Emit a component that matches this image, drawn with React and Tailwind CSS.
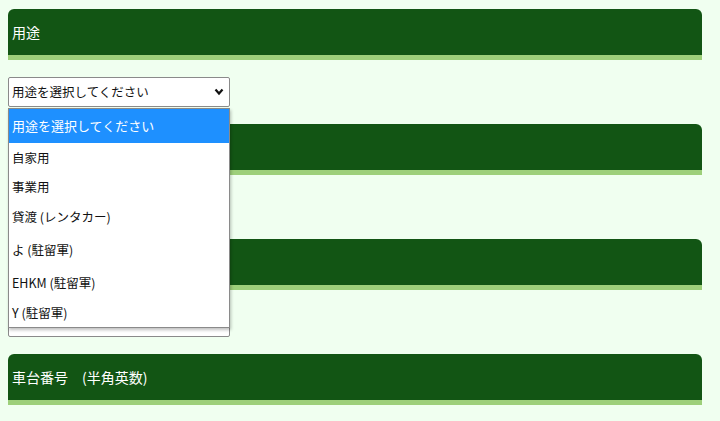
import React from "react";

const OPTIONS = [
  { label: "自家用", h: "h-[30px]" },
  { label: "事業用", h: "h-[28px]" },
  { label: "貸渡 (レンタカー)", h: "h-[33px]" },
  { label: "よ (駐留軍)", h: "h-[33px]" },
  { label: "EHKM (駐留軍)", h: "h-[32px]" },
  { label: "Y (駐留軍)", h: "h-[28px]" },
];

function Heading({ children }) {
  return (
    <div className="h-[51px] rounded-t-[6px] bg-[#125514] border-b-[5px] border-[#9dcf7a] px-1 flex items-center">
      <span className="text-white text-[14px] leading-none">{children}</span>
    </div>
  );
}

function FakeSelect({ text }) {
  return (
    <div className="w-[222px] h-[30px] bg-white border border-[#8a8a8a] rounded-[2px] flex items-center justify-between pl-[3px] pr-[5px]">
      <span className="text-[12.5px] text-[#111] whitespace-nowrap overflow-hidden">{text}</span>
      <svg width="10" height="8" viewBox="0 0 10 8" className="shrink-0">
        <path d="M1.5 1.5 L5 5.5 L8.5 1.5" fill="none" stroke="#111" strokeWidth="2.2" />
      </svg>
    </div>
  );
}

export default function App() {
  return (
    <div
      className="w-[720px] h-[421px] overflow-hidden bg-[#f0fff0] pt-[9px] pl-[8px] pr-[18px]"
      style={{ fontFamily: '"Noto Sans CJK JP", "Noto Sans", sans-serif' }}
    >
      {/* 用途 */}
      <section className="mb-[17px]">
        <Heading>用途</Heading>
        <div className="relative mt-[17px]">
          <FakeSelect text="用途を選択してください" />
          <div className="absolute left-0 top-[31px] z-10 w-[222px] bg-white border border-[#8a8a8a] shadow-[1px_2px_3px_rgba(0,0,0,0.25)]">
            <div className="h-[34px] bg-[#1e90ff] flex items-center pl-[3px]">
              <span className="text-white text-[13px]">用途を選択してください</span>
            </div>
            {OPTIONS.map((o) => (
              <div key={o.label} className={`${o.h} flex items-center pl-[3px]`}>
                <span className="text-[12.5px] text-[#111] whitespace-nowrap">{o.label}</span>
              </div>
            ))}
          </div>
        </div>
      </section>

      {/* 車種 */}
      <section className="mb-[17px]">
        <Heading>車種</Heading>
        <div className="mt-[17px]">
          <FakeSelect text="車種を選択してください" />
        </div>
      </section>

      {/* 種別 */}
      <section className="mb-[17px]">
        <Heading>種別</Heading>
        <div className="mt-[17px]">
          <FakeSelect text="複数の入力と文字数を選択してください" />
        </div>
      </section>

      {/* 車台番号 */}
      <section>
        <Heading>車台番号　(半角英数)</Heading>
      </section>
    </div>
  );
}
